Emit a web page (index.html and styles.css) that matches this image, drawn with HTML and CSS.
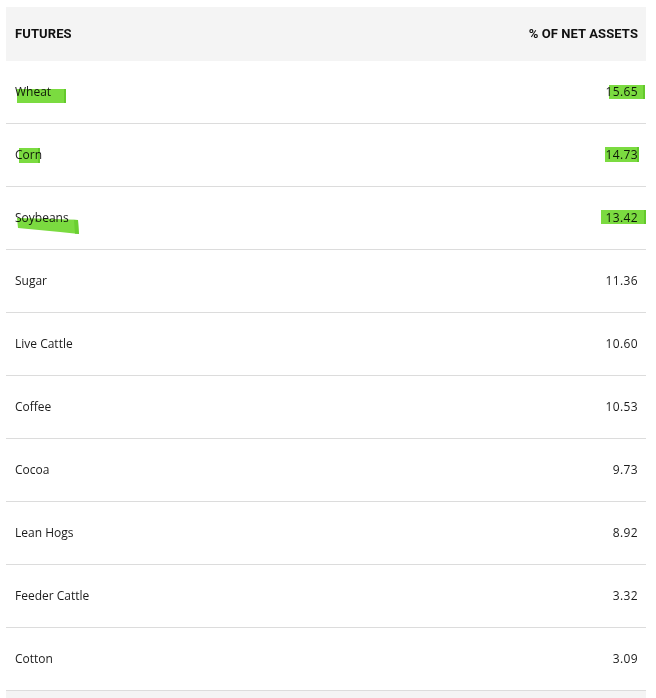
FILE: index.html
```html
<!DOCTYPE html>
<html lang="en">
<head>
<meta charset="utf-8">
<title>Futures holdings</title>
<link rel="stylesheet" href="styles.css">
</head>
<body>
<div class="holdings">
  <div class="row head">
    <div class="cell name">FUTURES</div>
    <div class="cell value">% OF NET ASSETS</div>
  </div>
  <div class="row">
    <div class="cell name">Wheat<span class="mark mark-wheat"></span></div>
    <div class="cell value">15.65<span class="mark mark-v1"></span></div>
  </div>
  <div class="row">
    <div class="cell name">Corn<span class="mark mark-corn"></span></div>
    <div class="cell value">14.73<span class="mark mark-v2"></span></div>
  </div>
  <div class="row">
    <div class="cell name">Soybeans<svg class="mark-soy" width="66" height="22" viewBox="0 0 66 22"><polygon points="1,2 40,3 62,4 63,18 44,16 2,12" fill="#7bdb40"/><polygon points="50,3 62,4 63,18 59,18 58,4" fill="#5fc626" opacity="0.6"/></svg></div>
    <div class="cell value">13.42<span class="mark mark-v3"></span></div>
  </div>
  <div class="row">
    <div class="cell name">Sugar</div>
    <div class="cell value">11.36</div>
  </div>
  <div class="row">
    <div class="cell name">Live Cattle</div>
    <div class="cell value">10.60</div>
  </div>
  <div class="row">
    <div class="cell name">Coffee</div>
    <div class="cell value">10.53</div>
  </div>
  <div class="row">
    <div class="cell name">Cocoa</div>
    <div class="cell value">9.73</div>
  </div>
  <div class="row">
    <div class="cell name">Lean Hogs</div>
    <div class="cell value">8.92</div>
  </div>
  <div class="row">
    <div class="cell name">Feeder Cattle</div>
    <div class="cell value">3.32</div>
  </div>
  <div class="row">
    <div class="cell name">Cotton</div>
    <div class="cell value">3.09</div>
  </div>
  <div class="foot"></div>
</div>
</body>
</html>
```
FILE: styles.css
```css
html, body {
  margin: 0;
  padding: 0;
  background: #ffffff;
}

body {
  padding: 7px 10px 0 6px;
}

.holdings {
  width: 640px;
  font-family: "Open Sans", "Noto Sans", sans-serif;
  font-size: 12px;
  color: #1c1c1c;
}

.row {
  display: flex;
  justify-content: space-between;
  align-items: center;
  height: 62px;
  border-bottom: 1px solid #dcdcdc;
  padding: 0 8px 0 9px;
}

.row.head {
  height: 54px;
  border-bottom: none;
  background: #f4f4f4;
  font-family: Roboto, "Liberation Sans", sans-serif;
  font-weight: 700;
  font-size: 13px;
  color: #111;
  letter-spacing: 0.1px;
}

.cell {
  position: relative;
  line-height: 16px;
}

.value {
  text-align: right;
  letter-spacing: 0.4px;
}

.head .value {
  letter-spacing: 0.1px;
}

.mark {
  position: absolute;
  background: #7bdb40;
  mix-blend-mode: multiply;
  border-right: 2px solid #63c92b;
}

.mark-soy {
  position: absolute;
  left: 1px;
  top: 6px;
  mix-blend-mode: multiply;
}

.mark-wheat {
  left: 2px;
  top: 5px;
  width: 47px;
  height: 14px;
}

.mark-corn {
  left: 4px;
  top: 1px;
  width: 19px;
  height: 15px;
}

.mark-v1 {
  right: -7px;
  top: 1px;
  width: 34px;
  height: 14px;
}

.mark-v2 {
  right: -1px;
  top: 0;
  width: 32px;
  height: 15px;
}

.mark-v3 {
  right: -8px;
  top: 0;
  width: 43px;
  height: 14px;
}

.foot {
  height: 20px;
  background: #f4f4f4;
}
```
